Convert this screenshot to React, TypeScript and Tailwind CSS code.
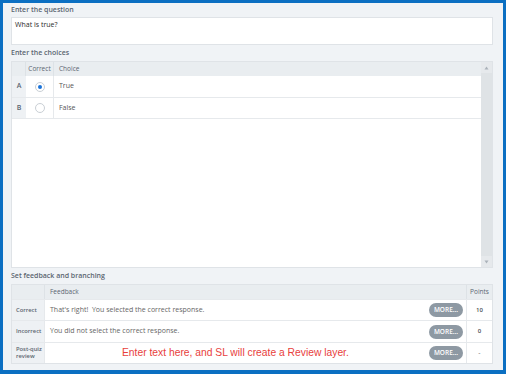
import React from 'react';

const font = { fontFamily: '"Open Sans", "Noto Sans", sans-serif' };

const Radio: React.FC<{ checked?: boolean }> = ({ checked }) => (
  <span className="flex h-[10px] w-[10px] items-center justify-center rounded-full border border-[#c9cfd5] bg-white">
    {checked && <span className="h-[4px] w-[4px] rounded-full bg-[#1a73d9]" />}
  </span>
);

const MoreButton: React.FC = () => (
  <span className="flex h-[14px] w-[34px] items-center justify-center rounded-full bg-[#8e99a3] text-[6.5px] font-semibold text-white">
    MORE...
  </span>
);

const choices = [
  { key: 'A', text: 'True', checked: true, h: 'h-[22px]' },
  { key: 'B', text: 'False', checked: false, h: 'h-[21px]' },
];

const feedback = [
  { label: 'Correct', text: "That's right!  You selected the correct response.", points: '10', h: 'h-[21px]' },
  { label: 'Incorrect', text: 'You did not select the correct response.', points: '0', h: 'h-[22px]' },
];

export default function App() {
  return (
    <div
      className="flex h-[374px] w-[506px] flex-col border-t-[3px] border-r-[3px] border-b-[4px] border-l-[3px] border-[#0b6fc2] bg-[#f0f3f6] pr-[10px] pl-[8px] text-[7px]"
      style={font}
    >
      <div className="flex h-[14px] items-center font-semibold text-[#5b6570]">Enter the question</div>
      <div className="h-[28px] border border-[#dfe3e7] bg-white px-[3px] pt-[2px] text-[#2b2b2b]">What is true?</div>

      <div className="flex h-[16px] items-center font-semibold text-[#5b6570]">Enter the choices</div>
      <div className="flex h-[207px] border border-[#dfe3e7] bg-white">
        <div className="flex flex-1 flex-col">
          <div className="flex h-[14px] bg-[#e9edf0] text-[6.5px] text-[#5b6570]">
            <div className="w-[14px] border-r border-[#dde2e6]" />
            <div className="flex w-[28px] items-center justify-center border-r border-[#dde2e6]">Correct</div>
            <div className="flex items-center pl-[5px]">Choice</div>
          </div>
          {choices.map((c) => (
            <div key={c.key} className={`flex ${c.h} border-b border-[#e6e9ec]`}>
              <div className="flex w-[14px] items-center justify-center bg-[#eef1f4] font-semibold text-[#5b6570]">
                {c.key}
              </div>
              <div className="flex w-[28px] items-center justify-center border-r border-[#e6e9ec]">
                <Radio checked={c.checked} />
              </div>
              <div className="flex items-center pl-[5px] text-[#555]">{c.text}</div>
            </div>
          ))}
        </div>
        <div className="flex w-[11px] flex-col justify-between bg-[#dfe3e6]">
          <div className="flex h-[11px] items-center justify-center bg-[#e6e9ec]">
            <svg width="5" height="4" viewBox="0 0 5 4">
              <path d="M2.5 0.5 L4.5 3.5 L0.5 3.5 Z" fill="#aab2b9" />
            </svg>
          </div>
          <div className="flex h-[11px] items-center justify-center bg-[#e6e9ec]">
            <svg width="5" height="4" viewBox="0 0 5 4">
              <path d="M0.5 0.5 L4.5 0.5 L2.5 3.5 Z" fill="#aab2b9" />
            </svg>
          </div>
        </div>
      </div>

      <div className="flex h-[16px] items-center font-semibold text-[#5b6570]">Set feedback and branching</div>
      <div className="flex flex-col border border-[#dfe3e7] bg-white">
        <div className="flex h-[14px] bg-[#e9edf0] text-[6.5px] text-[#5b6570]">
          <div className="w-[33px] border-r border-[#dde2e6]" />
          <div className="flex flex-1 items-center pl-[5px]">Feedback</div>
          <div className="flex w-[26px] items-center justify-center border-l border-[#dde2e6]">Points</div>
        </div>
        {feedback.map((f) => (
          <div key={f.label} className={`flex ${f.h} border-t border-[#e6e9ec]`}>
            <div className="flex w-[33px] items-center border-r border-[#e6e9ec] bg-[#eef1f4] pl-[4px] text-[5.8px] font-semibold whitespace-nowrap text-[#5b6570]">
              {f.label}
            </div>
            <div className="flex flex-1 items-center justify-between pr-[3px] pl-[5px] text-[#666]">
              <span className="whitespace-pre">{f.text}</span>
              <MoreButton />
            </div>
            <div className="flex w-[26px] items-center justify-center border-l border-[#e6e9ec] text-[6px] font-semibold text-[#4a4f55]">
              {f.points}
            </div>
          </div>
        ))}
        <div className="flex h-[21px] border-t border-[#e6e9ec]">
          <div className="flex w-[33px] flex-col justify-center border-r border-[#e6e9ec] bg-[#eef1f4] pl-[4px] text-[5.8px] leading-[7px] font-semibold whitespace-nowrap text-[#5b6570]">
            <span>Post-quiz</span>
            <span>review</span>
          </div>
          <div className="flex flex-1 items-center justify-between pr-[3px] pl-[77px]">
            <span className="text-[10.3px] text-[#e8403c]" style={{ fontFamily: '"Liberation Sans", Arial, sans-serif' }}>
              Enter text here, and SL will create a Review layer.
            </span>
            <MoreButton />
          </div>
          <div className="flex w-[26px] items-center justify-center border-l border-[#e6e9ec] text-[#777]">-</div>
        </div>
      </div>
    </div>
  );
}
